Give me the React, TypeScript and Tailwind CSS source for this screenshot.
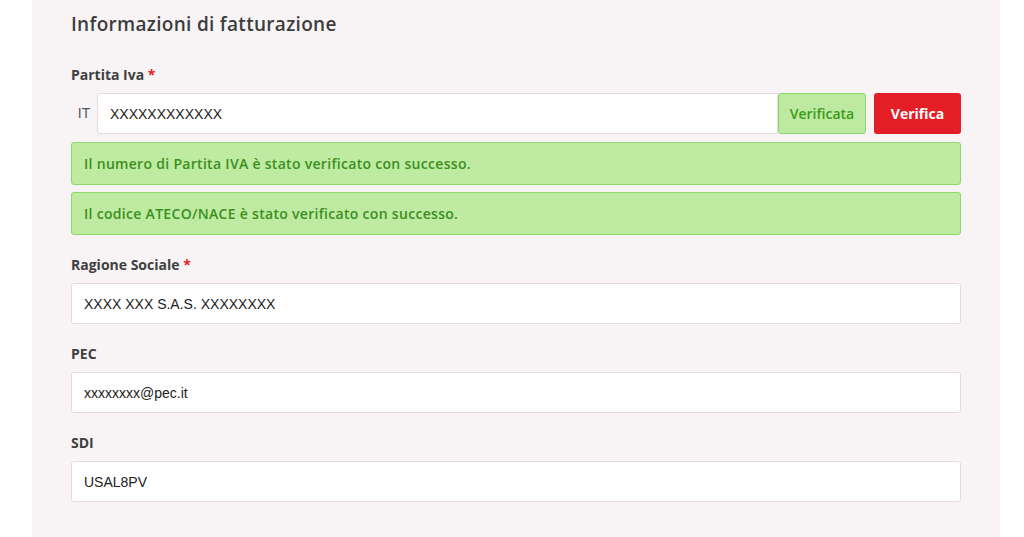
export default function App() {
  const label = 'block text-[14px] leading-[18px] font-bold text-[#3f3f3f]'
  const input =
    'w-full h-[41px] bg-white border border-[#e3dcdc] rounded-[3px] px-3 text-[14px] text-[#222] outline-none'
  const inputFont = { fontFamily: '"Liberation Sans", Arial, sans-serif' }
  const alert =
    'h-[43px] flex items-center px-[12px] bg-[#bfeaa2] border border-[#8bd86d] rounded-[3px] text-[14px] tracking-[0.3px] font-semibold text-[#3b8f1e]'

  return (
    <div className="min-h-screen bg-white" style={{ fontFamily: '"Open Sans", sans-serif' }}>
      <div className="ml-[32px] mr-[24px] h-[537px] bg-[#f8f4f5] px-[39px] pt-[10px]">
        <h2 className="text-[19px] leading-[28px] font-semibold tracking-[0.3px] text-[#3d3d3d]">
          Informazioni di fatturazione
        </h2>

        {/* Partita Iva */}
        <div className="mt-[28px]">
          <label className={label}>
            Partita Iva <span className="text-[#e31e26]">*</span>
          </label>
          <div className="mt-[9px] flex items-stretch">
            <span
              className="w-[26px] flex items-center justify-center text-[14px] text-[#555]"
              style={inputFont}
            >
              IT
            </span>
            <input
              className="flex-1 min-w-0 h-[41px] bg-white border border-[#e3dcdc] rounded-l-[3px] px-3 text-[14px] text-[#222] outline-none"
              style={inputFont}
              defaultValue="XXXXXXXXXXXX"
            />
            <button className="w-[88px] h-[41px] bg-[#bde9a0] border border-[#8bd86d] rounded-[3px] text-[14px] font-semibold text-[#3a9a1a]">
              Verificata
            </button>
            <button className="ml-[8px] w-[87px] h-[41px] bg-[#e31e26] rounded-[3px] text-[14px] font-bold text-white">
              Verifica
            </button>
          </div>
        </div>

        {/* Alerts */}
        <div className="mt-[8px] flex flex-col gap-[7px]">
          <div className={alert}>Il numero di Partita IVA è stato verificato con successo.</div>
          <div className={alert}>Il codice ATECO/NACE è stato verificato con successo.</div>
        </div>

        {/* Ragione Sociale */}
        <div className="mt-[21px]">
          <label className={label}>
            Ragione Sociale <span className="text-[#e31e26]">*</span>
          </label>
          <input className={`mt-[9px] ${input}`} style={inputFont} defaultValue="XXXX XXX S.A.S. XXXXXXXX" />
        </div>

        {/* PEC */}
        <div className="mt-[21px]">
          <label className={label}>PEC</label>
          <input className={`mt-[9px] ${input}`} style={inputFont} defaultValue="xxxxxxxx@pec.it" />
        </div>

        {/* SDI */}
        <div className="mt-[21px]">
          <label className={label}>SDI</label>
          <input className={`mt-[9px] ${input}`} style={inputFont} defaultValue="USAL8PV" />
        </div>
      </div>
    </div>
  )
}
